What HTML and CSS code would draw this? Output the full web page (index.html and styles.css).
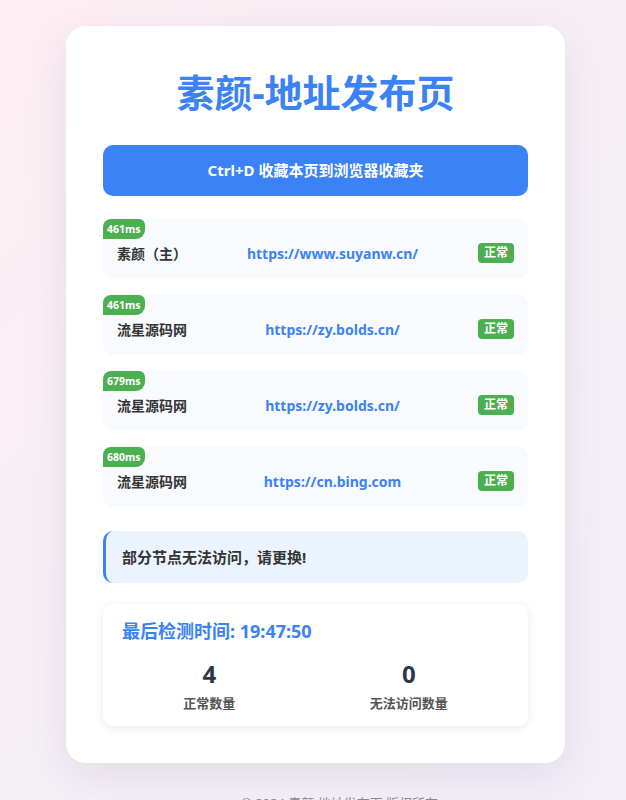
FILE: index.html
```html
<!DOCTYPE html>
<html lang="zh-CN">
<head>
    <meta charset="UTF-8">
    <meta name="viewport" content="width=device-width, initial-scale=1.0">
    <title>素颜-地址发布页</title>
    <link rel="stylesheet" href="styles.css">
</head>
<body>
    <div class="container">
        <h1 class="title">素颜-地址发布页</h1>

        <div class="fav-btn">Ctrl+D 收藏本页到浏览器收藏夹</div>

        <div class="list">
            <div class="item">
                <span class="delay">461ms</span>
                <span class="name">素颜（主）</span>
                <a class="url" href="#">https://www.suyanw.cn/</a>
                <span class="status">正常</span>
            </div>
            <div class="item">
                <span class="delay">461ms</span>
                <span class="name">流星源码网</span>
                <a class="url" href="#">https://zy.bolds.cn/</a>
                <span class="status">正常</span>
            </div>
            <div class="item">
                <span class="delay">679ms</span>
                <span class="name">流星源码网</span>
                <a class="url" href="#">https://zy.bolds.cn/</a>
                <span class="status">正常</span>
            </div>
            <div class="item">
                <span class="delay">680ms</span>
                <span class="name">流星源码网</span>
                <a class="url" href="#">https://cn.bing.com</a>
                <span class="status">正常</span>
            </div>
        </div>

        <div class="notice">部分节点无法访问，请更换!</div>

        <div class="stats">
            <div class="stats-time">最后检测时间: <span id="time">19:47:50</span></div>
            <div class="stats-row">
                <div class="stat">
                    <div class="stat-num">4</div>
                    <div class="stat-label">正常数量</div>
                </div>
                <div class="stat">
                    <div class="stat-num">0</div>
                    <div class="stat-label">无法访问数量</div>
                </div>
            </div>
        </div>
    </div>

    <div class="footer">© 2024 素颜 地址发布页 版权所有</div>
</body>
</html>
```

FILE: styles.css
```css
:root {
    --blue: #3b82f6;
    --green: #4caf50;
    --text: #333;
    --font: "Noto Sans", "Noto Sans CJK SC", sans-serif;
}
body {
    margin: 0;
    padding: 26px 0 0 5px;
    font-family: var(--font);
    background: linear-gradient(135deg, #fdeef3 0%, #f6eff6 50%, #f2eff8 100%);
    min-height: 100vh;
    box-sizing: border-box;
    color: var(--text);
}
.container {
    width: 499px;
    margin: 0 auto;
    box-sizing: border-box;
    padding: 41px 37px 37px;
    background: #fff;
    border-radius: 20px;
    box-shadow: 0 12px 40px rgba(110, 90, 140, 0.13);
}
.title {
    margin: 0 0 28px;
    text-align: center;
    font-size: 38px;
    line-height: 50px;
    font-weight: 700;
    color: var(--blue);
}
.fav-btn {
    height: 51px;
    line-height: 51px;
    text-align: center;
    background: var(--blue);
    color: #fff;
    font-size: 15px;
    font-weight: 700;
    border-radius: 10px;
    margin-bottom: 22px;
}
.list {
    display: flex;
    flex-direction: column;
    gap: 15px;
}
.item {
    position: relative;
    display: flex;
    justify-content: space-between;
    align-items: center;
    height: 61px;
    box-sizing: border-box;
    padding: 25px 14px 16px;
    background: #f8fafd;
    border-radius: 10px;
}
.delay {
    position: absolute;
    top: 1px;
    left: 0;
    height: 20px;
    line-height: 20px;
    padding: 0 4px;
    background: var(--green);
    color: #fff;
    font-size: 10.5px;
    font-weight: 700;
    border-radius: 8px 6px 9px 0;
}
.name {
    font-size: 14px;
    font-weight: 700;
    color: var(--text);
}
.url {
    font-size: 14px;
    font-weight: 700;
    color: var(--blue);
    text-decoration: none;
}
.status {
    height: 20px;
    line-height: 20px;
    padding: 0 6px;
    background: var(--green);
    color: #fff;
    font-size: 12px;
    font-weight: 700;
    border-radius: 4px;
}
.notice {
    margin-top: 24px;
    height: 52px;
    line-height: 52px;
    box-sizing: border-box;
    padding-left: 16px;
    background: #eaf3fe;
    border-left: 3px solid var(--blue);
    border-radius: 10px;
    font-size: 15px;
    font-weight: 700;
    color: var(--text);
}
.stats {
    margin-top: 21px;
    padding: 14px 13px 13px;
    background: #fff;
    border-radius: 10px;
    box-shadow: 0 2px 10px rgba(0, 0, 0, 0.09);
}
.stats-time {
    padding: 0 6px;
    font-size: 18px;
    line-height: 26px;
    font-weight: 700;
    color: var(--blue);
}
.stats-row {
    display: flex;
    justify-content: space-around;
    margin-top: 14px;
}
.stat {
    text-align: center;
}
.stat-num {
    font-size: 24px;
    line-height: 32px;
    font-weight: 700;
    color: #2d3748;
}
.stat-label {
    margin-top: 3px;
    font-size: 13px;
    line-height: 20px;
    font-weight: 700;
    color: #555;
}
.footer {
    margin-top: 30px;
    text-align: center;
    padding-left: 48px;
    font-size: 13px;
    color: #888;
}
```
